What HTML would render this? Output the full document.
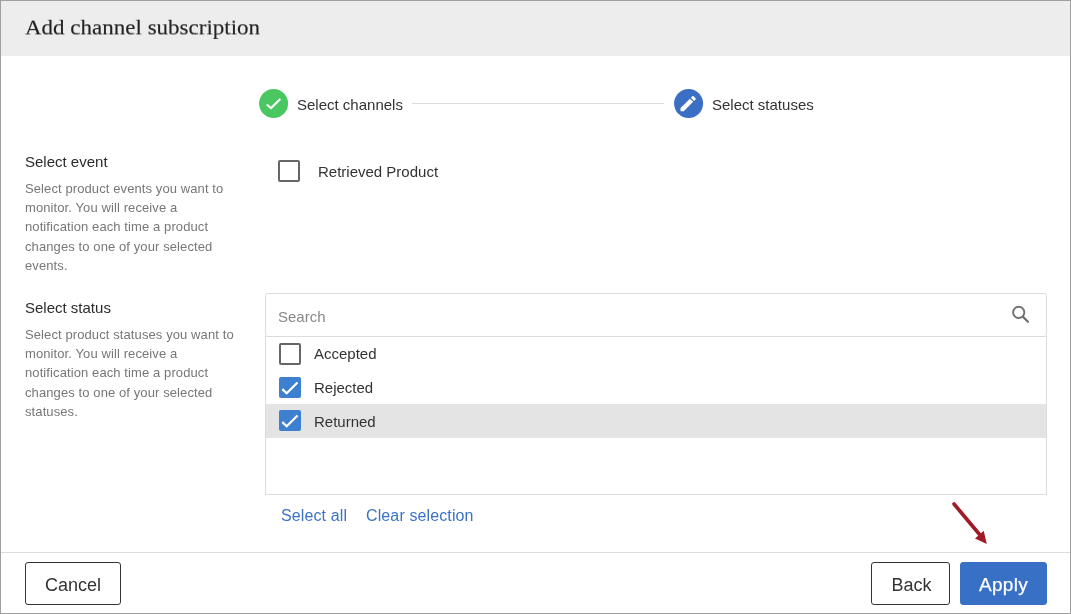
<!DOCTYPE html>
<html><head><meta charset="utf-8">
<style>
*{box-sizing:border-box;margin:0;padding:0}
html,body{width:1071px;height:614px;overflow:hidden;background:#fff}
.abs,.btn,.cb,.cbc{will-change:transform}
body{font-family:"Liberation Sans",sans-serif;color:#333;position:relative}
.frame{position:absolute;left:0;top:0;width:1071px;height:614px;border:1px solid #a0a0a0}
.abs{position:absolute;white-space:nowrap}
.header{position:absolute;left:1px;top:1px;width:1069px;height:55px;background:#ededed}
.title{font-family:"Liberation Serif",serif;font-size:23px;color:#222;-webkit-text-stroke:0.15px #222;transform:scaleY(0.92);transform-origin:0 0}
.step{font-size:15px;color:#333}
.lbl{font-size:15px;color:#2b2b2b}
.desc{font-size:13px;color:#777;line-height:19.2px;letter-spacing:0.1px}
.cb{position:absolute;width:22px;height:22px;border:2px solid #666;border-radius:2px;background:#fff}
.cbc{position:absolute;width:22px;height:21px;border-radius:2px;background:#3d80d0}
.item{font-size:15px;color:#333}
.link{font-size:16px;color:#3b73c4;letter-spacing:0.12px}
.btn{position:absolute;height:43px;border:1px solid #333;border-radius:3px;background:#fff;font-size:18px;color:#333;text-align:center;line-height:45px}
</style></head><body>
<div class="header"></div>
<div class="abs title" style="left:24.6px;top:15.6px">Add channel subscription</div>

<!-- stepper -->
<svg class="abs" style="left:0;top:0" width="1071" height="140">
  <circle cx="273.6" cy="103.5" r="14.5" fill="#4ac760"/>
  <path d="M266.7 104.5 L271 108.1 L280.4 99.1" stroke="#fff" stroke-width="2.1" fill="none"/>
  <line x1="412" y1="103.5" x2="664" y2="103.5" stroke="#dcdcdc" stroke-width="1"/>
  <circle cx="688.6" cy="103.5" r="14.5" fill="#3a6fc4"/>
  <g transform="translate(678 93.4) scale(0.85)" fill="#fff">
    <path d="M3 17.25V21h3.75L17.81 9.94l-3.75-3.75L3 17.25z"/>
    <path d="M20.71 7.04c.39-.39.39-1.02 0-1.41l-2.34-2.34c-.39-.39-1.02-.39-1.41 0l-1.83 1.83 3.75 3.75 1.83-1.83z"/>
  </g>
</svg>
<div class="abs step" style="left:297px;top:96px">Select channels</div>
<div class="abs step" style="left:712px;top:96px">Select statuses</div>

<!-- section 1 -->
<div class="abs lbl" style="left:25px;top:152.5px">Select event</div>
<div class="abs desc" style="left:25px;top:179px">Select product events you want to<br>monitor. You will receive a<br>notification each time a product<br>changes to one of your selected<br>events.</div>
<div class="cb" style="left:278px;top:160px"></div>
<div class="abs item" style="left:318px;top:162.5px">Retrieved Product</div>

<!-- section 2 -->
<div class="abs lbl" style="left:25px;top:298.5px">Select status</div>
<div class="abs desc" style="left:25px;top:325px">Select product statuses you want to<br>monitor. You will receive a<br>notification each time a product<br>changes to one of your selected<br>statuses.</div>

<div class="abs" style="left:265px;top:336px;width:782px;height:159px;border:1px solid #dcdcdc"></div>
<div class="abs" style="left:266px;top:404px;width:780px;height:34px;background:#e4e4e4"></div>
<div class="abs" style="left:265px;top:293px;width:782px;height:44px;border:1px solid #dcdcdc;border-radius:3px;background:#fff"></div>
<div class="abs" style="left:277.5px;top:307.5px;font-size:15px;color:#888">Search</div>
<svg class="abs" style="left:1005px;top:300px" width="30" height="30">
  <circle cx="13.7" cy="12.4" r="5.6" stroke="#707070" stroke-width="1.9" fill="none"/>
  <line x1="17.8" y1="16.6" x2="23" y2="21.8" stroke="#707070" stroke-width="2.2" stroke-linecap="round"/>
</svg>

<div class="cb" style="left:279px;top:343px"></div>
<div class="abs item" style="left:314px;top:344.5px">Accepted</div>
<div class="cbc" style="left:279px;top:377px"></div>
<div class="abs item" style="left:314px;top:378.5px">Rejected</div>
<div class="cbc" style="left:279px;top:410px"></div>
<div class="abs item" style="left:314px;top:412.5px">Returned</div>
<svg class="abs" style="left:0;top:0" width="320" height="450">
  <path d="M282.3 389.1 L286.7 393.3 L297.5 382.5" stroke="#fff" stroke-width="2.2" fill="none"/>
  <path d="M282.3 422.1 L286.7 426.3 L297.5 415.5" stroke="#fff" stroke-width="2.2" fill="none"/>
</svg>

<div class="abs link" style="left:281px;top:507px">Select all</div>
<div class="abs link" style="left:366px;top:507px">Clear selection</div>

<!-- arrow -->
<svg class="abs" style="left:0;top:0" width="1071" height="614">
  <line x1="954" y1="504" x2="980" y2="535" stroke="#a11a28" stroke-width="3.6" stroke-linecap="round"/>
  <path d="M975 538.6 L983.7 530.8 L986.8 544 Z" fill="#a11a28"/>
</svg>

<!-- footer -->
<div class="abs" style="left:1px;top:552px;width:1069px;height:1px;background:#dcdcdc"></div>
<div class="btn" style="left:25px;top:562px;width:96px">Cancel</div>
<div class="btn" style="left:871px;top:562px;width:79px;padding-left:2px">Back</div>
<div class="btn" style="left:960px;top:562px;width:87px;background:#3870c5;border-color:#3870c5;color:#fff;font-size:19px;line-height:43px;letter-spacing:0.3px;-webkit-text-stroke:0.25px #fff">Apply</div>

<div class="frame"></div>
</body></html>
